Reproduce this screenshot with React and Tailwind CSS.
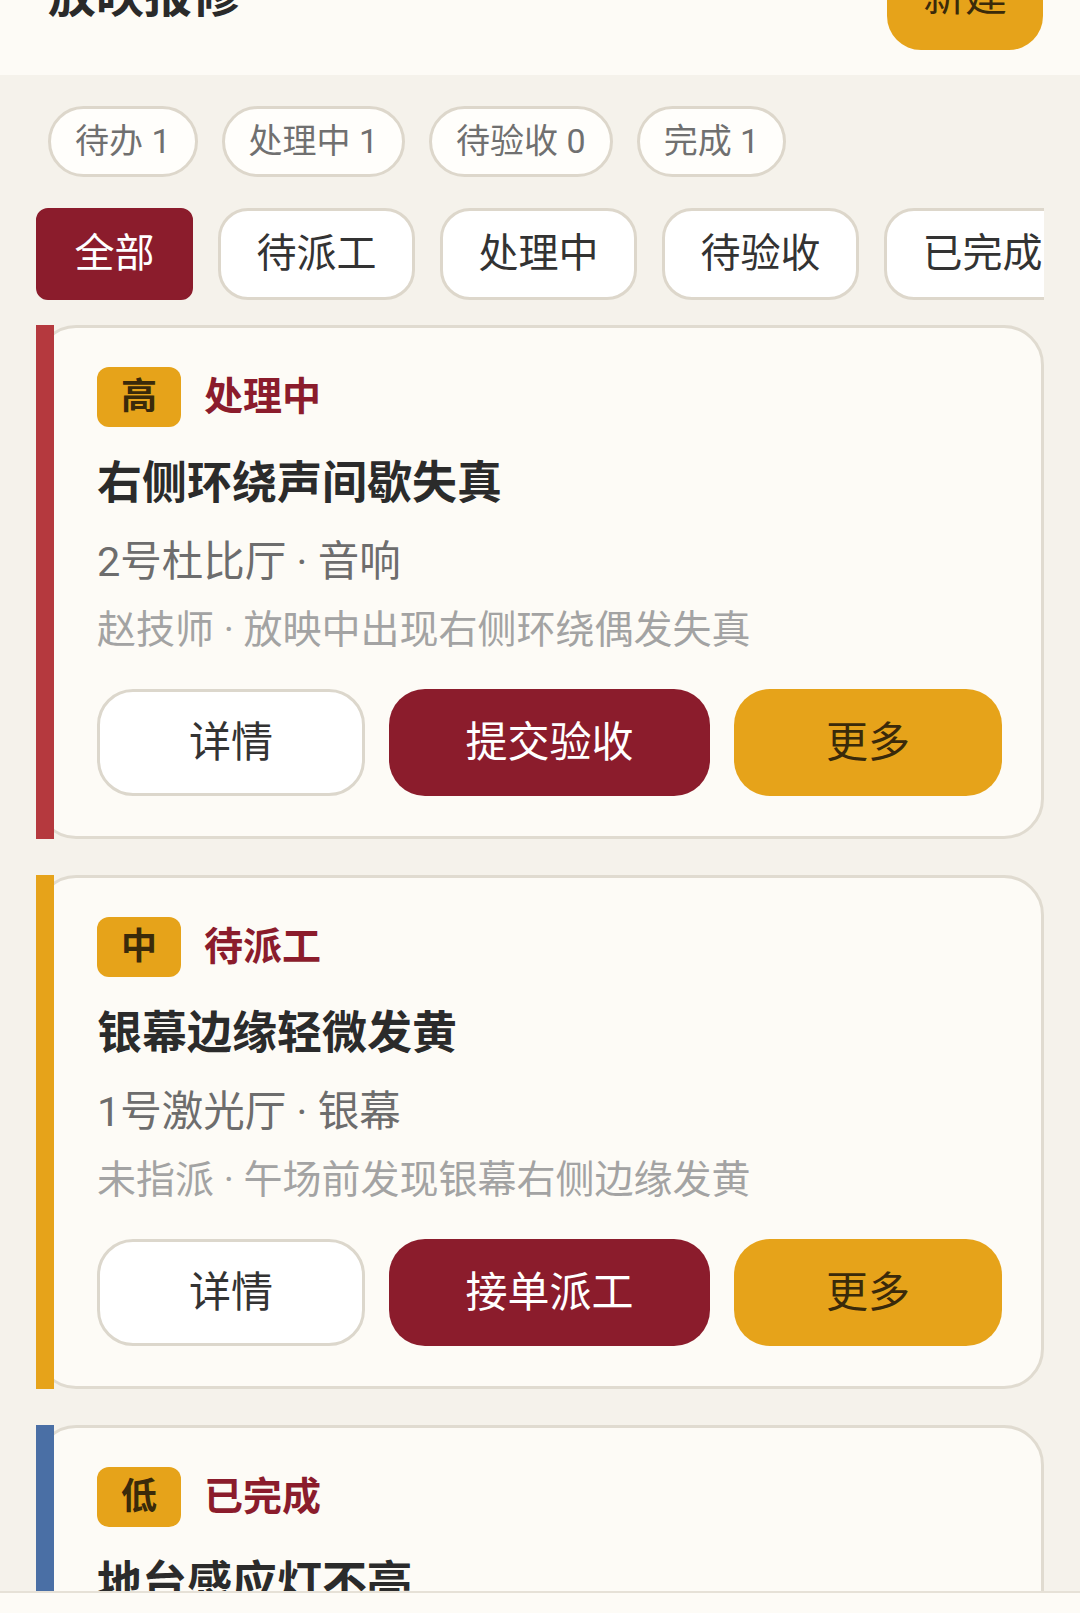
import React from "react";

const STATS = [
  { label: "待办", count: 1 },
  { label: "处理中", count: 1 },
  { label: "待验收", count: 0 },
  { label: "完成", count: 1 },
];

const TABS = ["全部", "待派工", "处理中", "待验收", "已完成"];

const TICKETS = [
  {
    bar: "bg-[#b5393e]",
    level: "高",
    status: "处理中",
    title: "右侧环绕声间歇失真",
    meta: "2号杜比厅 · 音响",
    detail: "赵技师 · 放映中出现右侧环绕偶发失真",
    action: "提交验收",
  },
  {
    bar: "bg-[#e6a31a]",
    level: "中",
    status: "待派工",
    title: "银幕边缘轻微发黄",
    meta: "1号激光厅 · 银幕",
    detail: "未指派 · 午场前发现银幕右侧边缘发黄",
    action: "接单派工",
  },
  {
    bar: "bg-[#4a6fa5]",
    level: "低",
    status: "已完成",
    title: "地台感应灯不亮",
    meta: "3号厅 · 灯光",
    detail: "钱技师 · 已更换地台感应灯模块",
    action: "查看记录",
  },
];

const TicketCard = ({ t }) => (
  <div className="relative">
    <div className="rounded-[40px] border-[3px] border-[#e0dbd0] bg-[#fdfbf6] pl-[58px] pr-[39px] pt-[39px] pb-[40px]">
      {/* badge + status */}
      <div className="flex items-center h-[60px]">
        <span className="h-[60px] px-[24px] rounded-[12px] bg-[#e6a31a] text-[#3a2a0a] text-[36px] font-semibold flex items-center">
          {t.level}
        </span>
        <span className="ml-[23px] text-[39px] font-semibold text-[#8b1c2c]">{t.status}</span>
      </div>
      <div className="mt-[27px] text-[45px] leading-[60px] font-bold text-[#2b2b2b]">{t.title}</div>
      <div className="mt-[22px] text-[41.5px] leading-[52px] text-[#6d6d6d]">{t.meta}</div>
      <div className="mt-[17px] text-[39px] leading-[50px] text-[#a3a3a3]">{t.detail}</div>
      <div className="mt-[34px] grid grid-cols-[1fr_1.2fr_1fr] gap-[24px]">
        <button className="h-[107px] rounded-[36px] border-[3px] border-[#dcd7cc] bg-white text-[42px] text-[#333]">
          详情
        </button>
        <button className="h-[107px] rounded-[36px] bg-[#8b1c2c] text-[42px] text-white">
          {t.action}
        </button>
        <button className="h-[107px] rounded-[36px] bg-[#e6a31a] text-[42px] text-[#3a2a0a]">
          更多
        </button>
      </div>
    </div>
    {/* priority bar over the card's left edge */}
    <div className={`absolute left-0 top-0 bottom-0 w-[18px] ${t.bar}`} />
  </div>
);

export default function App() {
  return (
    <div className="relative h-[1613px] overflow-hidden bg-[#f5f2eb] font-['Roboto','Noto_Sans_CJK_SC',sans-serif]">
      <div className="-mt-[83px]">
        {/* Header */}
        <div className="bg-[#fdfbf6] flex items-center justify-between pl-[48px] pr-[37px] pt-[25px] pb-[25px]">
          <h1 className="text-[48px] font-bold text-[#2a2a2a]">放映报修</h1>
          <button className="h-[108px] px-[36px] rounded-[34px] bg-[#e6a31a] text-[42px] text-[#3a2a0a]">新建</button>
        </div>

        {/* Stats */}
        <div className="flex gap-[24px] px-[48px] pt-[31px]">
          {STATS.map(s => (
            <div
              key={s.label}
              className="h-[71px] px-[24px] rounded-full border-[3px] border-[#ddd7cb] bg-[#fffefb] flex items-center text-[34px] text-[#707070]"
            >
              {s.label} {s.count}
            </div>
          ))}
        </div>

        {/* Filter tabs */}
        <div className="mx-[36px] mt-[31px] overflow-hidden">
          <div className="flex gap-[25px]">
            {TABS.map((tab, i) => (
              <div
                key={tab}
                className={`shrink-0 h-[92px] px-[35.5px] border-[3px] flex items-center text-[40px] ${
                  i === 0
                    ? "rounded-[12px] bg-[#8b1c2c] border-[#8b1c2c] text-white"
                    : "rounded-[30px] bg-white border-[#ddd7cb] text-[#333]"
                }`}
              >
                {tab}
              </div>
            ))}
          </div>
        </div>

        {/* Tickets */}
        <div className="px-[36px] mt-[25px] flex flex-col gap-[36px]">
          {TICKETS.map(t => (
            <TicketCard key={t.title} t={t} />
          ))}
        </div>
      </div>

      {/* bottom bar peeking in */}
      <div className="absolute left-0 right-0 bottom-0 h-[22px] bg-[#fdfbf6] border-t-[2px] border-[#e6e1d7]" />
    </div>
  );
}
